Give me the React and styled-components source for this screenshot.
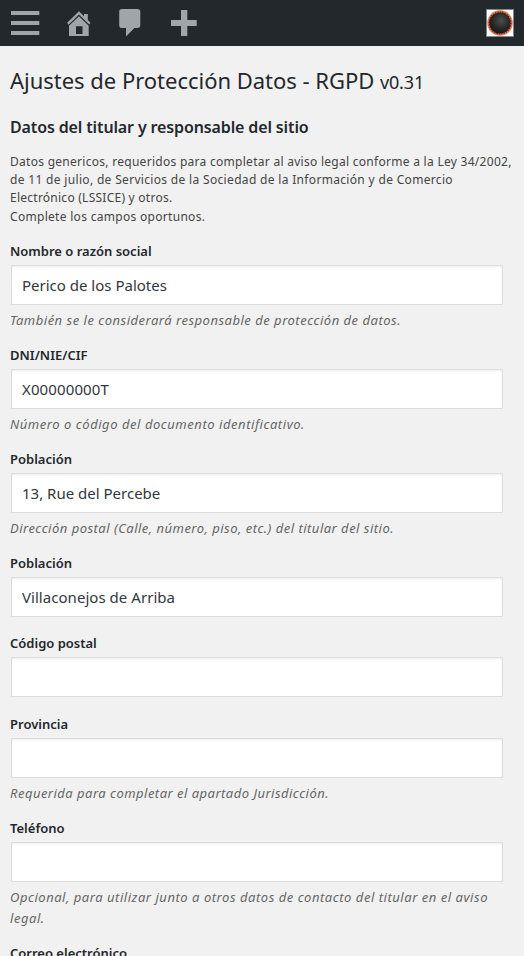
import React from "react";
import styled, { createGlobalStyle } from "styled-components";

const GlobalStyle = createGlobalStyle`
  * { box-sizing: border-box; }
  html { background: #f1f1f1; }
  body {
    margin: 0;
    height: 956px;
    overflow: hidden;
    font-family: "Noto Sans", "Open Sans", sans-serif;
    font-size: 13px;
    color: #444;
  }
`;

const AdminBar = styled.header`
  display: flex;
  align-items: flex-start;
  justify-content: space-between;
  height: 46px;
  padding: 9px 10px 0 11px;
  background: #23282d;
`;

const BarMenu = styled.nav`
  display: flex;
  gap: 24px;
`;

const BarButton = styled.button`
  display: block;
  width: 29px;
  height: 28px;
  padding: 0;
  border: 0;
  background: none;
  color: #a0a5aa;

  svg {
    display: block;
    fill: currentColor;
  }
`;

const Avatar = styled.svg`
  display: block;
  width: 28px;
  height: 28px;
  border: 1px solid #82878c;
  background: #fff;
`;

const Page = styled.main`
  height: 910px;
  padding: 19px 10px 0;
  overflow: hidden;
`;

const Title = styled.h1`
  margin: 0;
  font-size: 22px;
  font-weight: 400;
  line-height: 30px;
  letter-spacing: -0.02px;
  color: #23282d;
  white-space: nowrap;
`;

const Version = styled.small`
  font-size: 18px;
  line-height: 1;
  letter-spacing: -0.15px;
`;

const SectionTitle = styled.h2`
  margin: 19.5px 0 0;
  font-size: 16px;
  font-weight: 600;
  line-height: 24px;
  letter-spacing: -0.13px;
  color: #23282d;
`;

const Intro = styled.p`
  margin: 14px -8px 14.5px 0;
  font-size: 12px;
  line-height: 18.4px;
`;

const IntroLine = styled.span`
  display: block;
  letter-spacing: ${(p) => p.$tracking};
  white-space: nowrap;
`;

const Form = styled.form`
  display: flex;
  flex-direction: column;
`;

const Field = styled.div`
  flex: none;
  height: ${(p) => (p.$hasHint ? "104.2px" : "80.2px")};
`;

const Label = styled.label`
  display: block;
  height: 24px;
  font-weight: 600;
  line-height: 21.2px;
  color: #23282d;
`;

const Input = styled.input`
  display: block;
  width: calc(100% - 12px);
  height: 40px;
  margin: 0 0 0 1px;
  padding: 0 10px;
  border: 1px solid #ddd;
  border-radius: 0;
  outline: 0;
  background: #fff;
  box-shadow: inset 0 1px 2px rgba(0, 0, 0, 0.07);
  font-family: inherit;
  font-size: 15px;
  letter-spacing: ${(p) => p.$tracking || "0"};
  color: #32373c;
`;

const Hint = styled.p`
  margin: 5.4px 0 0;
  font-style: italic;
  line-height: 21px;
  letter-spacing: ${(p) => p.$tracking};
  color: #666;
`;

const LastField = styled.div`
  margin-top: 20.6px;
`;

const FIELDS = [
  { id: "nombre", label: "Nombre o razón social", value: "Perico de los Palotes", hint: "También se le considerará responsable de protección de datos.", tracking: "0.504px" },
  { id: "dni", label: "DNI/NIE/CIF", value: "X00000000T", inputTracking: "0.12px", hint: "Número o código del documento identificativo.", tracking: "0.548px" },
  { id: "direccion", label: "Población", value: "13, Rue del Percebe", hint: "Dirección postal (Calle, número, piso, etc.) del titular del sitio.", tracking: "0.485px" },
  { id: "poblacion", label: "Población", value: "Villaconejos de Arriba", inputTracking: "0.04px" },
  { id: "postal", label: "Código postal" },
  { id: "provincia", label: "Provincia", hint: "Requerida para completar el apartado Jurisdicción.", tracking: "0.478px" },
  { id: "telefono", label: "Teléfono", hint: "Opcional, para utilizar junto a otros datos de contacto del titular en el aviso legal.", tracking: "0.533px" },
];

function MenuIcon() {
  return (
    <svg width="29" height="28" viewBox="0 0 29 28">
      <path d="M0 2h28.3v4H0zM0 12h28.3v4H0zM0 22h28.3v4H0z" />
    </svg>
  );
}

function HomeIcon() {
  return (
    <svg width="29" height="28" viewBox="0 0 29 28">
      <path d="M15 2.3 20 7.2V5h3.8v6l2.7 2.7-1.4 1.9L15 5.6 4.6 15.7l-1.5-1.9z" />
      <path d="M15 7.3 24.7 16.8V27H18.5V17.3H12V25H18.5V27H5V16.8z" />
    </svg>
  );
}

function CommentIcon() {
  return (
    <svg width="29" height="28" viewBox="0 0 29 28">
      <path d="M5 0h15.5q2.8 0 2.8 2.8v13.4q0 2.8-2.8 2.8H17.4L9 27.6V19H5q-2.8 0-2.8-2.8V2.8Q2.2 0 5 0z" />
    </svg>
  );
}

function PlusIcon() {
  return (
    <svg width="29" height="28" viewBox="0 0 29 28">
      <path d="M11 1h6.3v10h9.4v6h-9.4v10H11V17H1v-6h10z" />
    </svg>
  );
}

function AvatarPicture() {
  return (
    <Avatar viewBox="0 0 26 26">
      <defs>
        <radialGradient id="ball" cx="56%" cy="38%" r="65%">
          <stop offset="0" stopColor="#4c504b" />
          <stop offset="0.55" stopColor="#292c2b" />
          <stop offset="1" stopColor="#151516" />
        </radialGradient>
      </defs>
      <circle cx="13" cy="13" r="12.9" fill="#eba184" />
      <circle cx="13" cy="13" r="12.2" fill="#df6c43" />
      <circle cx="13" cy="13" r="10.6" fill="url(#ball)" />
      <circle cx="13" cy="13" r="10.8" fill="none" stroke="#3c211c" strokeWidth="1.2" strokeDasharray="1.2 1.2" />
    </Avatar>
  );
}

const MENU = [
  { name: "Menú", Icon: MenuIcon },
  { name: "Inicio", Icon: HomeIcon },
  { name: "Comentarios", Icon: CommentIcon },
  { name: "Añadir", Icon: PlusIcon },
];

export default function App() {
  return (
    <>
      <GlobalStyle />
      <AdminBar>
        <BarMenu>
          {MENU.map(({ name, Icon }) => (
            <BarButton key={name} aria-label={name}>
              <Icon />
            </BarButton>
          ))}
        </BarMenu>
        <AvatarPicture />
      </AdminBar>
      <Page>
        <Title>
          Ajustes de Protección Datos - RGPD <Version>v0.31</Version>
        </Title>
        <SectionTitle>Datos del titular y responsable del sitio</SectionTitle>
        <Intro>
          <IntroLine $tracking="0.28px">
            Datos genericos, requeridos para completar al aviso legal conforme a la Ley 34/2002,
          </IntroLine>
          <IntroLine $tracking="0.325px">
            de 11 de julio, de Servicios de la Sociedad de la Información y de Comercio
          </IntroLine>
          <IntroLine $tracking="0.25px">Electrónico (LSSICE) y otros.</IntroLine>
          <IntroLine $tracking="0.3px">Complete los campos oportunos.</IntroLine>
        </Intro>
        <Form>
          {FIELDS.map((f) => (
            <Field key={f.id} $hasHint={Boolean(f.hint)}>
              <Label htmlFor={f.id}>{f.label}</Label>
              <Input id={f.id} type="text" defaultValue={f.value} $tracking={f.inputTracking} />
              {f.hint && <Hint $tracking={f.tracking}>{f.hint}</Hint>}
            </Field>
          ))}
          <LastField>
            <Label htmlFor="correo">Correo electrónico</Label>
            <Input id="correo" type="text" />
          </LastField>
        </Form>
      </Page>
    </>
  );
}
